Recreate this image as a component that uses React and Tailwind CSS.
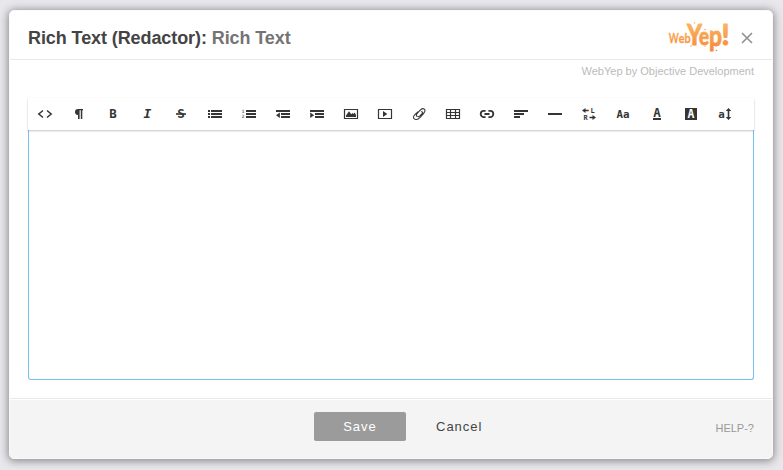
import React from "react";

const mono = { fontFamily: '"DejaVu Sans Mono", monospace', fontWeight: 700 };

function Glyph({ x = 8, y = 12, size = 12, children, ...rest }) {
  return (
    <text x={x} y={y} fontSize={size} textAnchor="middle" fill="currentColor" stroke="none" {...mono} {...rest}>
      {children}
    </text>
  );
}

const tools = [
  ["Code", <path d="M6 4.5L1.8 8 6 11.5M10 4.5L14.2 8 10 11.5" fill="none" stroke="currentColor" strokeWidth="1.5" />],
  ["Paragraph", <path d="M12 3H7a3 3 0 0 0 0 6v4h1.6V4.2h1.2V13h1.5V4.2H12z" />],
  ["Bold", <Glyph size={12.5}>B</Glyph>],
  ["Italic", <Glyph size={13} fontStyle="italic" x={8.3}>I</Glyph>],
  ["Strikethrough", <><Glyph size={12.5}>S</Glyph><path d="M3 7.2h10v1.6H3z" /></>],
  ["Bulleted list", <path shapeRendering="crispEdges" d="M1 4h2v2H1zM1 7h2v2H1zM1 10h2v2H1zM4 4h11v2H4zM4 7h11v2H4zM4 10h11v2H4z" />],
  ["Numbered list", <><g opacity="0.8"><Glyph x={2} y={7} size={4.5}>1</Glyph><Glyph x={2} y={12.4} size={4.5}>2</Glyph></g><path shapeRendering="crispEdges" d="M5 4h10v2H5zM5 7h10v2H5zM5 10h10v2H5z" /></>],
  ["Outdent", <><path shapeRendering="crispEdges" d="M1 4h14v2H1zM6 7h9v2H6zM6 10h9v2H6z" /><path d="M1 9.3L4.9 6.6v5.4z" /></>],
  ["Indent", <><path shapeRendering="crispEdges" d="M1 4h14v2H1zM6 7h9v2H6zM6 10h9v2H6z" /><path d="M5.1 9.3L1.2 6.6v5.4z" /></>],
  ["Image", <><path d="M1.5 3.5h13v9h-13z" fill="none" stroke="currentColor" strokeWidth="1.2" /><path d="M3 11V9.5L6 5.2l2.2 3 1.3-1.3 1 1L11.7 6.5 13 9v2z" /></>],
  ["Video", <><path d="M1.5 3.5h13v9h-13z" fill="none" stroke="currentColor" strokeWidth="1.2" /><path d="M6 5L10.3 8 6 11z" /></>],
  ["File", <path d="M5.6 10.1C4.8 9 5.3 8.3 6.2 7.3L8.7 4.6C10.5 2.7 12.2 2.2 13.3 3.2s.7 2.7-.8 4.4L9.3 11.1C8 12.6 6.9 13.7 5 13.5c-2.2-.2-3.2-2-2-3.8.9-1.4 2.5-2.8 3.9-3.9M6.7 10.4c.9.7 1.7.1 2.5-.7l1.9-2c1-1.1.5-2.2-.7-1.9" fill="none" stroke="currentColor" strokeWidth="1.05" strokeLinecap="round" />],
  ["Table", <path d="M1.5 3.5h13v9h-13zM1 6.5h14M1 9.5h14M5.5 3v10M10.5 3v10" fill="none" stroke="currentColor" strokeWidth="1.2" />],
  ["Link", <path d="M6.6 4.9H4.8a3.1 3.1 0 0 0 0 6.2h1.8M9.4 4.9h1.8a3.1 3.1 0 0 1 0 6.2H9.4M5.5 8h5" fill="none" stroke="currentColor" strokeWidth="1.8" />],
  ["Align", <path shapeRendering="crispEdges" d="M1 4h14v2H1zM1 7h10v2H1zM1 10h6v2H1z" />],
  ["Line", <path shapeRendering="crispEdges" d="M1 7h14v2H1z" />],
  ["Direction", <><path d="M1 4.5l3.5-2.5v1.8h3.2v1.4H4.5V7zM15 11.5L11.5 9v1.8h-3v1.4h3V14z" /><Glyph x={11.5} y={7.2} size={7}>L</Glyph><Glyph x={4.5} y={14} size={7}>R</Glyph></>],
  ["Font family", <Glyph x={8} y={12} size={10.8}>Aa</Glyph>],
  ["Font color", <><Glyph y={11} size={12.5}>A</Glyph><path shapeRendering="crispEdges" d="M4 12h8v2H4z" /></>],
  ["Background color", <><path d="M2 2h12v12H2z" /><Glyph y={12} size={11.5} style={{ fill: "white" }}>A</Glyph></>],
  ["Font size", <><Glyph x={4.5} y={11.5} size={10.8}>a</Glyph><path d="M11.5 2L14.3 5h-2v6h2l-2.8 3L8.7 11h2V5h-2z" /></>],
];

function Logo() {
  return (
    <svg width="62" height="34" viewBox="0 0 62 34" role="img" aria-label="WebYep!" className="block overflow-visible">
      <defs>
        <linearGradient id="flame" gradientUnits="userSpaceOnUse" x1="0" y1="2" x2="0" y2="32">
          <stop offset="0" stopColor="#f9b760" />
          <stop offset="1" stopColor="#f78335" />
        </linearGradient>
      </defs>
      <g fill="url(#flame)" fontFamily="Lato, sans-serif">
        <g fontWeight="700" stroke="url(#flame)" strokeWidth="0.3">
          <text x="0.8" y="22" fontSize="14" textLength="10" lengthAdjust="spacingAndGlyphs">W</text>
          <text x="10.8" y="21.5" fontSize="12.5" textLength="5.7" lengthAdjust="spacingAndGlyphs">e</text>
          <text x="16.5" y="21.5" fontSize="14" textLength="6.2" lengthAdjust="spacingAndGlyphs">b</text>
        </g>
        <g stroke="url(#flame)" strokeWidth="0.9" strokeLinejoin="round">
          <text x="19" y="24" fontSize="29" fontWeight="900" textLength="15" lengthAdjust="spacingAndGlyphs">Y</text>
          <text x="31" y="23.5" fontSize="24" fontWeight="700" textLength="10" lengthAdjust="spacingAndGlyphs">e</text>
          <text x="41" y="25" fontSize="29" fontWeight="700" textLength="13" lengthAdjust="spacingAndGlyphs">p</text>
          <text x="53.5" y="23.7" fontSize="28" fontWeight="900" textLength="8" lengthAdjust="spacingAndGlyphs">!</text>
        </g>
        <circle cx="26.5" cy="2" r="0.8" /><circle cx="33.5" cy="4" r="0.6" />
        <circle cx="37" cy="8.5" r="0.8" /><circle cx="23" cy="25" r="0.7" />
        <circle cx="48.5" cy="29.5" r="0.8" /><circle cx="37" cy="25.5" r="0.5" />
      </g>
    </svg>
  );
}

export default function App() {
  return (
    <div className="h-[470px] w-[783px] overflow-hidden bg-[#e8e7eb] pl-[9px] pt-[10px] font-['Liberation_Sans',Arial,sans-serif]">
      <section className="flex h-[449px] w-[764px] flex-col rounded-[5px] border border-[#f8f9fd] bg-white shadow-[0_1px_8px_1px_rgba(0,0,0,0.42)]">
        <header className="flex h-[49px] shrink-0 items-center border-b border-[#e9e9e9] pl-[18px] pr-[19px]">
          <h1 className="mt-[5px] whitespace-nowrap text-[18px] font-bold leading-[24px] tracking-[-0.09px] text-[#444]">
            Rich Text (Redactor): <span className="text-[#747474]">Rich Text</span>
          </h1>
          <div className="ml-auto mr-[11px] mt-[5px]"><Logo /></div>
          <button aria-label="Close" className="mt-[6px] text-[#909090]">
            <svg width="12" height="12" viewBox="0 0 12 12" fill="none" stroke="currentColor" strokeWidth="1.6" className="block"><path d="M1 1l10 10M11 1L1 11" /></svg>
          </button>
        </header>
        <main className="flex flex-1 flex-col px-[18px] pb-[18px]">
          <p className="h-[38px] pt-[3px] text-right text-[11px] leading-[16px] text-[#bbb]">WebYep by Objective Development</p>
          <div className="z-10 flex h-[32px] shrink-0 items-center bg-white text-[#353535] shadow-[0_1px_2px_rgba(0,0,0,0.24)]">
            {tools.map(([name, drawing]) => (
              <button key={name} aria-label={name} className="flex h-[32px] w-[34px] items-center justify-center">
                <svg width="16" height="16" viewBox="0 0 16 16" fill="currentColor" className="block overflow-visible">{drawing}</svg>
              </button>
            ))}
          </div>
          <div className="flex-1 rounded-b-[3px] border border-t-0 border-[#76c1f0] bg-white" />
        </main>
        <footer className="flex h-[60px] shrink-0 flex-col rounded-b-[4px] border-t border-[#e9e9e9] bg-white pt-px">
          <div className="grid flex-1 grid-cols-[304px_92px_1fr_auto] items-start rounded-b-[4px] bg-[#f4f4f4] pr-[18px] pt-[12px]">
            <span />
            <button className="h-[29px] rounded-[2px] bg-[#9b9b9b] text-[13px] tracking-[1px] text-white">Save</button>
            <button className="h-[29px] justify-self-start pl-[30px] text-[13px] tracking-[1px] text-[#444]">Cancel</button>
            <span className="pt-[8px] text-[11px] leading-[16px] text-[#999]">HELP-?</span>
          </div>
        </footer>
      </section>
    </div>
  );
}
